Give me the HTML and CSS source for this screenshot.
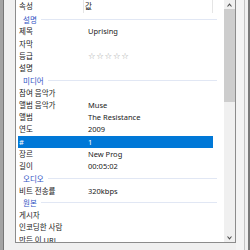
FILE: index.html
```html
<!DOCTYPE html>
<html lang="ko">
<head>
    <meta charset="UTF-8">
    <title>속성 - 자세히</title>
    <link rel="stylesheet" href="styles.css">
</head>
<body>
    <div class="screen">
        <div class="edge-left"></div>
        <div class="dialog">
            <div class="details">
                <div class="list">
                    <div class="list-head">
                        <div class="head-name">속성</div>
                        <div class="head-value">값</div>
                    </div>

                    <div class="group"><span>설명</span></div>
                    <div class="row"><span class="name">제목</span><span class="value">Uprising</span></div>
                    <div class="row"><span class="name">자막</span><span class="value"></span></div>
                    <div class="row">
                        <span class="name">등급</span>
                        <span class="value stars"><span>☆</span><span>☆</span><span>☆</span><span>☆</span><span>☆</span></span>
                    </div>
                    <div class="row"><span class="name">설명</span><span class="value"></span></div>

                    <div class="group"><span>미디어</span></div>
                    <div class="row"><span class="name">참여 음악가</span><span class="value"></span></div>
                    <div class="row"><span class="name">앨범 음악가</span><span class="value">Muse</span></div>
                    <div class="row"><span class="name">앨범</span><span class="value">The Resistance</span></div>
                    <div class="row"><span class="name">연도</span><span class="value">2009</span></div>
                    <div class="row selected"><span class="name">#</span><span class="value">1</span></div>
                    <div class="row"><span class="name">장르</span><span class="value">New Prog</span></div>
                    <div class="row"><span class="name">길이</span><span class="value">00:05:02</span></div>

                    <div class="group"><span>오디오</span></div>
                    <div class="row"><span class="name">비트 전송률</span><span class="value">320kbps</span></div>

                    <div class="group"><span>원본</span></div>
                    <div class="row"><span class="name">게시자</span><span class="value"></span></div>
                    <div class="row"><span class="name">인코딩한 사람</span><span class="value"></span></div>
                    <div class="row"><span class="name">만든 이 URL</span><span class="value"></span></div>
                </div>

                <div class="scrollbar">
                    <div class="sb-btn">
                        <svg width="5" height="4" viewBox="0 0 5 4"><polyline points="0.5,3.5 2.5,1.2 4.5,3.5" fill="none" stroke="#505050" stroke-width="1.1"/></svg>
                    </div>
                    <div class="sb-thumb"></div>
                    <div class="sb-track"></div>
                    <div class="sb-btn">
                        <svg width="5" height="4" viewBox="0 0 5 4"><polyline points="0.5,0.5 2.5,2.8 4.5,0.5" fill="none" stroke="#505050" stroke-width="1.1"/></svg>
                    </div>
                </div>
            </div>

            <div class="edge-right">
                <div class="gap"></div>
                <div class="line"></div>
                <div class="gap-small"></div>
                <div class="frame"></div>
            </div>
        </div>
    </div>
</body>
</html>
```

FILE: styles.css
```css
body {
    margin: 0;
    background-color: #f0f0f0;
    font-family: "Noto Sans", "Noto Sans CJK KR", sans-serif;
    font-size: 7.5px;
    color: #1a1a1a;
}

.screen {
    display: flex;
    width: 250px;
    height: 250px;
    overflow: hidden;
}

.edge-left {
    width: 3px;
    background-color: #a3a3a3;
    border-right: 1px solid #767676;
}

.dialog {
    flex: 1;
    display: flex;
    padding-left: 11px;
    background-color: #f0f0f0;
}

.details {
    display: flex;
    width: 221px;
    height: 244px;
    margin-top: -1px;
    box-sizing: border-box;
    border: 1px solid #8c8c8c;
    background-color: white;
}

.list {
    width: 208px;
    overflow: hidden;
}

.list-head {
    display: flex;
    height: 13px;
    line-height: 12px;
}

.head-name {
    width: 64px;
    padding-left: 3px;
    border-right: 1px solid #e5e5e5;
}

.head-value {
    width: 127px;
    padding-left: 1px;
    border-right: 1px solid #e5e5e5;
}

.row {
    display: flex;
    height: 12.25px;
    line-height: 12.25px;
    white-space: nowrap;
}

.row .name {
    width: 69px;
    padding-left: 3px;
}

.row.selected {
    width: 195px;
    margin-left: 2px;
    background-color: #0078d7;
    color: white;
}

.row.selected .name {
    width: 69px;
    padding-left: 1px;
}

.stars {
    display: flex;
    color: #a6a6a6;
    font-family: "DejaVu Sans", sans-serif;
    font-size: 8.5px;
}

.stars span {
    width: 8.3px;
}

.group {
    display: flex;
    align-items: center;
    height: 12.25px;
    padding-left: 7px;
    padding-right: 7px;
    color: #2f54c4;
}

.group::after {
    content: "";
    flex: 1;
    height: 1px;
    margin-left: 4px;
    background-color: #e1e7f4;
}

.scrollbar {
    width: 11px;
    display: flex;
    flex-direction: column;
    background-color: #f0f0f0;
}

.sb-btn {
    height: 9px;
    display: flex;
    align-items: center;
    justify-content: center;
}

.sb-thumb {
    height: 93px;
    background-color: #cdcdcd;
}

.sb-track {
    flex: 1;
}

.edge-right {
    flex: 1;
    display: flex;
}

.edge-right .gap {
    width: 8px;
    background-color: #f4f4f4;
}

.edge-right .line {
    width: 1px;
    background-color: #c4c4c4;
}

.edge-right .gap-small {
    width: 3px;
    background-color: #f0f0f0;
}

.edge-right .frame {
    flex: 1;
    background-color: #7a7a7a;
}
```
